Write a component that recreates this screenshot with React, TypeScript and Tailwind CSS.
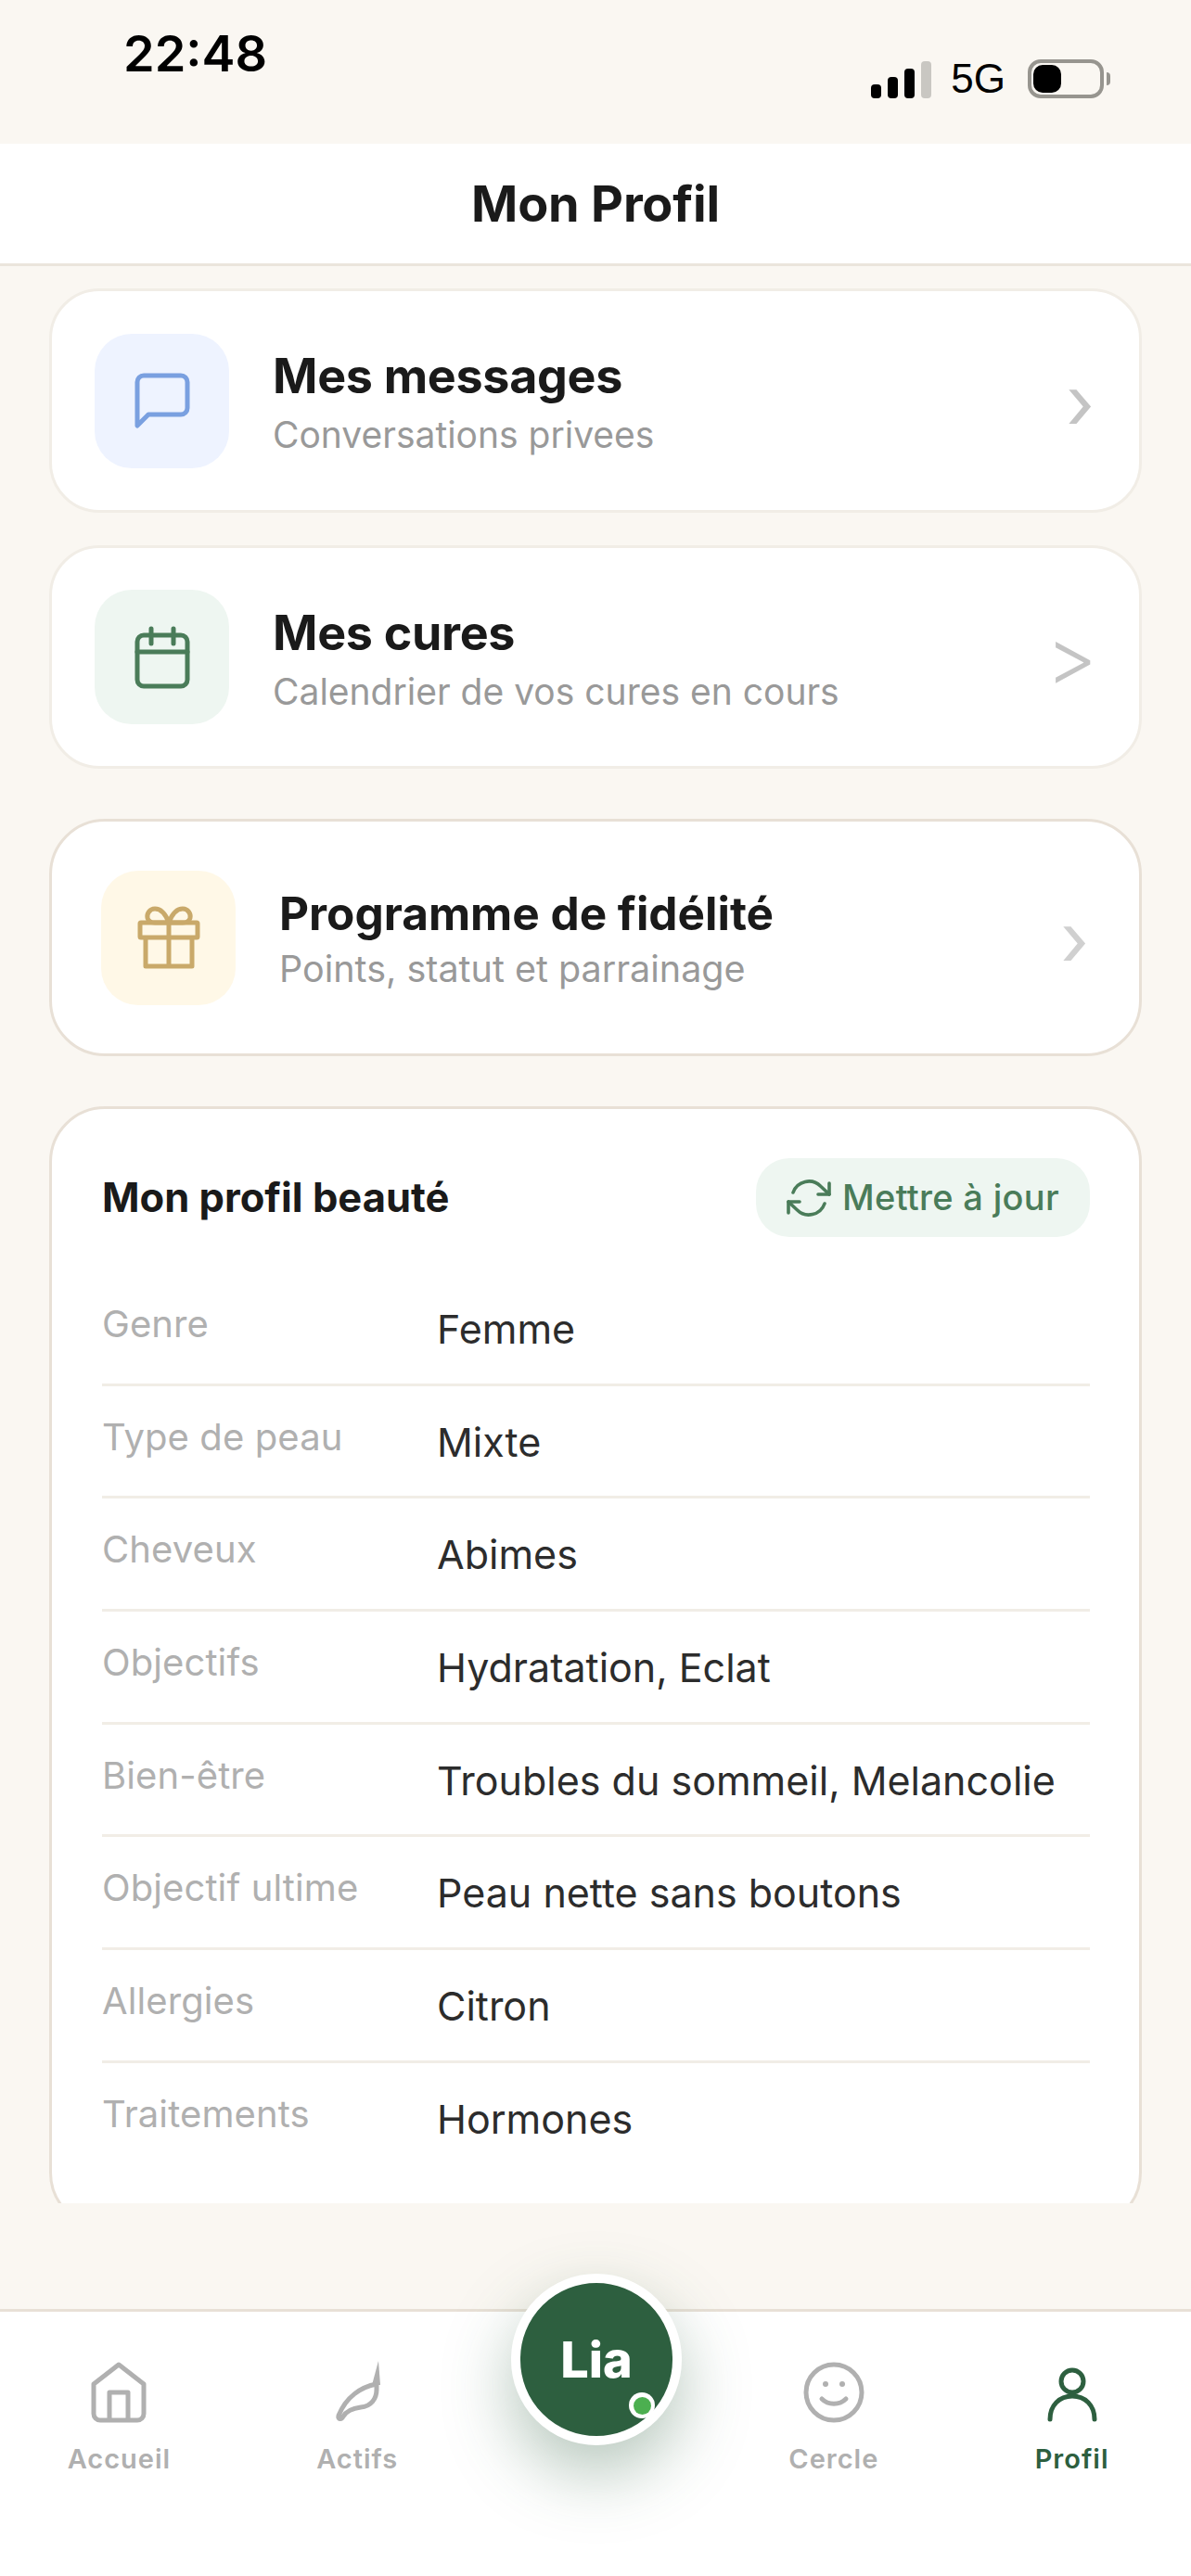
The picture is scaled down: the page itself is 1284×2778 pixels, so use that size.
import { ReactNode } from "react";
import { FiRefreshCw } from "react-icons/fi";

const profileRows = [
  ["Genre", "Femme"],
  ["Type de peau", "Mixte"],
  ["Cheveux", "Abimes"],
  ["Objectifs", "Hydratation, Eclat"],
  ["Bien-être", "Troubles du sommeil, Melancolie"],
  ["Objectif ultime", "Peau nette sans boutons"],
  ["Allergies", "Citron"],
  ["Traitements", "Hormones"],
];

function StatusBar() {
  return (
    <div className="relative h-[155px] shrink-0 bg-[#faf7f2] text-black">
      <div className="flex items-start justify-between pl-[133px] pr-[87px]">
        <span className="mt-[27px] text-[54px] leading-[62px] font-semibold">22:48</span>
        <div className="mt-[64px] flex items-center">
          <div className="flex h-[42px] items-end gap-[7px]">
            <span className="h-[15px] w-[11px] rounded-[4px] bg-black" />
            <span className="h-[23px] w-[11px] rounded-[4px] bg-black" />
            <span className="h-[32px] w-[11px] rounded-[4px] bg-black" />
            <span className="h-[40px] w-[11px] rounded-[4px] bg-[#c9c7c2]" />
          </div>
          <span className="ml-[21px] font-['Liberation_Sans',sans-serif] text-[44px] leading-[42px]">5G</span>
          <div className="ml-[24px] flex h-[42px] w-[82px] items-center rounded-[14px] border-4 border-[#97958f] p-[2px]">
            <span className="h-[30px] w-[30px] rounded-[10px] bg-black" />
          </div>
          <span className="ml-[3px] h-[14px] w-[4px] rounded-r-full bg-[#97958f]" />
        </div>
      </div>
    </div>
  );
}

function MessageIcon() {
  return (
    <svg width="60" height="60" viewBox="0 0 60 60" fill="none" stroke="#7aa0e0" strokeWidth="5" strokeLinejoin="round">
      <path d="M3 57V10a7 7 0 0 1 7-7h40a7 7 0 0 1 7 7v28a7 7 0 0 1-7 7H15Z" />
    </svg>
  );
}

function CalendarIcon() {
  return (
    <svg width="60" height="68" viewBox="0 0 60 68" fill="none" stroke="#4a7c59" strokeWidth="5" strokeLinecap="round" strokeLinejoin="round">
      <rect x="3" y="10" width="54" height="55" rx="7" />
      <path d="M3 28h54M18 3v16M42 3v16" />
    </svg>
  );
}

function GiftIcon() {
  return (
    <svg width="68" height="68" viewBox="0 0 68 68" fill="none" stroke="#c9a96a" strokeWidth="5" strokeLinejoin="round">
      <rect x="3" y="18" width="62" height="16" rx="1" />
      <path d="M9 34v31h50V34M34 18v47" />
      <path d="M34 18c-3-8-8-15-15-15-6 0-9 6-8 10 1 4 4 5 8 5ZM34 18c3-8 8-15 15-15 6 0 9 6 8 10-1 4-4 5-8 5Z" />
    </svg>
  );
}

function HomeIcon() {
  return (
    <svg width="60" height="66" viewBox="0 0 60 66" fill="none" stroke="#b0b0b0" strokeWidth="5" strokeLinejoin="round">
      <path d="M30 3 3 24v32a7 7 0 0 0 7 7h40a7 7 0 0 0 7-7V24Z" />
      <path d="M20 63V33h20v30" />
    </svg>
  );
}

function LeafIcon() {
  return (
    <svg width="52" height="68" viewBox="0 0 52 68" fill="none" stroke="#b0b0b0" strokeWidth="5" strokeLinejoin="round" strokeLinecap="round">
      <path d="M47 26C30 29 14 40 6 60c-1 4 3 5 5 1 4-7 11-9 19-10 11-1 17-9 17-19Z" />
      <path d="M49 1 42 27h9Z" fill="#b0b0b0" stroke="none" />
    </svg>
  );
}

function SmileIcon() {
  return (
    <svg width="66" height="66" viewBox="0 0 66 66" fill="none" stroke="#b0b0b0" strokeWidth="5" strokeLinecap="round">
      <circle cx="33" cy="33" r="30" />
      <path d="M20 40c7 7 19 7 26 0" />
      <circle cx="24" cy="24" r="3" fill="#b0b0b0" stroke="none" />
      <circle cx="42" cy="24" r="3" fill="#b0b0b0" stroke="none" />
    </svg>
  );
}

function PersonIcon() {
  return (
    <svg width="54" height="60" viewBox="0 0 54 60" fill="none" stroke="#2d5f3f" strokeWidth="5" strokeLinecap="round">
      <circle cx="27" cy="15" r="12" />
      <path d="M3 56c0-15 10-25 24-25s24 10 24 25" />
    </svg>
  );
}

type MenuCardProps = {
  icon: ReactNode;
  iconBg: string;
  title: string;
  subtitle: string;
  chevron: ReactNode;
  className: string;
  titleClass: string;
  subtitleClass: string;
  textClass: string;
};

function MenuCard({ icon, iconBg, title, subtitle, chevron, className, titleClass, subtitleClass, textClass }: MenuCardProps) {
  return (
    <div className={`flex items-center border-[3px] bg-white ${className}`}>
      <div className={`flex h-[145px] w-[145px] shrink-0 items-center justify-center rounded-[40px] ${iconBg}`}>
        {icon}
      </div>
      <div className={`ml-[47px] min-w-0 flex-1 ${textClass}`}>
        <p className={`leading-[60px] font-bold text-[#1a1a1a] ${titleClass}`}>{title}</p>
        <p className={`leading-[50px] text-[#999999] ${subtitleClass}`}>{subtitle}</p>
      </div>
      {chevron}
    </div>
  );
}

function BeautyProfile() {
  return (
    <section className="mt-[54px] rounded-[60px] border-[3px] border-[#e8e0d6] bg-white pt-[53px] pr-[53px] pb-[53px] pl-[54px]">
      <div className="flex h-[85px] items-center justify-between">
        <h2 className="text-[43.5px] font-bold text-[#1a1a1a]">Mon profil beauté</h2>
        <button
          type="button"
          className="flex h-[85px] w-[360px] items-center justify-center gap-[12px] rounded-[36px] bg-[#eef6f1] text-[38px] font-medium tracking-[0.3px] text-[#4a7c59]"
        >
          <FiRefreshCw size={48} strokeWidth={1.8} />
          Mettre à jour
        </button>
      </div>
      <div className="mt-[39px]">
        {profileRows.map(([label, value], index) => (
          <div
            key={label}
            className={
              index < profileRows.length - 1
                ? "flex h-[121.7px] items-start border-b-[3px] border-[#f1ede6]"
                : "flex h-[121.7px] items-start"
            }
          >
            <span className="mt-[35px] w-[361px] shrink-0 text-[40px] leading-[40px] tracking-[0.1px] text-[#b0b0b0]">{label}</span>
            <span className="mt-[35px] text-[43px] leading-[50px] text-[#2c2c2c]">{value}</span>
          </div>
        ))}
      </div>
    </section>
  );
}

type TabProps = {
  label: string;
  icon: ReactNode;
  active?: boolean;
};

function Tab({ label, icon, active }: TabProps) {
  return (
    <div className="flex flex-col items-center">
      <div className="flex h-[69px] items-end">{icon}</div>
      <span
        className={
          active
            ? "mt-[21px] text-[29px] leading-[36px] font-semibold tracking-[1px] text-[#2d5f3f]"
            : "mt-[21px] text-[29px] leading-[36px] font-semibold tracking-[1px] text-[#b0b0b0]"
        }
      >
        {label}
      </span>
    </div>
  );
}

export default function App() {
  return (
    <div className="flex h-[2778px] w-[1284px] flex-col overflow-hidden bg-[#faf7f2] font-['Inter',sans-serif]">
      <StatusBar />
      <header className="flex h-[132px] shrink-0 items-center justify-center border-b-[3px] border-[#ebe5dc] bg-white">
        <h1 className="text-[54px] font-bold tracking-[-0.2px] text-[#1a1a1a]">Mon Profil</h1>
      </header>

      <main className="min-h-0 flex-1">
        <div className="h-[2089px] overflow-hidden px-[53px] pt-[24px]">
          <MenuCard
            className="h-[242px] rounded-[54px] border-[#f1ede6] pr-[48px] pl-[46px]"
            iconBg="bg-[#eef3ff]"
            icon={<MessageIcon />}
            title="Mes messages"
            titleClass="text-[52px] tracking-[-0.3px]"
            subtitle="Conversations privees"
            subtitleClass="mt-[8px] text-[39px]"
            textClass="pt-[6px]"
            chevron={<span className="mt-[3px] text-[80px] leading-none text-[#c4c4c4]">›</span>}
          />
          <MenuCard
            className="mt-[35px] h-[241px] rounded-[54px] border-[#f1ede6] pr-[45px] pl-[46px]"
            iconBg="bg-[#eef6f1]"
            icon={<CalendarIcon />}
            title="Mes cures"
            titleClass="text-[52px] tracking-[-0.3px]"
            subtitle="Calendrier de vos cures en cours"
            subtitleClass="mt-[8px] text-[39px]"
            textClass="pt-[6px]"
            chevron={<span className="text-[85px] leading-none font-light text-[#c4c4c4]">&gt;</span>}
          />
          <MenuCard
            className="mt-[54px] h-[256px] rounded-[60px] border-[#e8e0d6] pr-[54px] pl-[53px]"
            iconBg="bg-[#fff8e7]"
            icon={<GiftIcon />}
            title="Programme de fidélité"
            titleClass="text-[49.5px]"
            subtitle="Points, statut et parrainage"
            subtitleClass="mt-[5px] text-[39.5px]"
            textClass="pt-[3px]"
            chevron={<span className="mt-[3px] text-[80px] leading-none text-[#d0d0d0]">›</span>}
          />
          <BeautyProfile />
        </div>
      </main>

      <nav className="relative h-[288px] shrink-0 border-t-[3px] border-[#e8e0d6] bg-white">
        <div className="grid grid-cols-5 pt-[51px]">
          <Tab label="Accueil" icon={<HomeIcon />} />
          <Tab label="Actifs" icon={<LeafIcon />} />
          <div />
          <Tab label="Cercle" icon={<SmileIcon />} />
          <Tab label="Profil" icon={<PersonIcon />} active />
        </div>
        <div className="absolute top-[-41px] left-[551px] flex h-[185px] w-[184px] items-center justify-center rounded-full border-[10px] border-white bg-[#2d5f3f] shadow-[0_30px_72px_rgba(45,95,63,0.35)]">
          <span className="text-[54px] font-extrabold text-white">Lia</span>
          <span className="absolute top-[118px] left-[117px] flex h-[28px] w-[28px] items-center justify-center rounded-full bg-white">
            <span className="h-[19px] w-[19px] rounded-full bg-[#4caf50]" />
          </span>
        </div>
      </nav>
    </div>
  );
}
